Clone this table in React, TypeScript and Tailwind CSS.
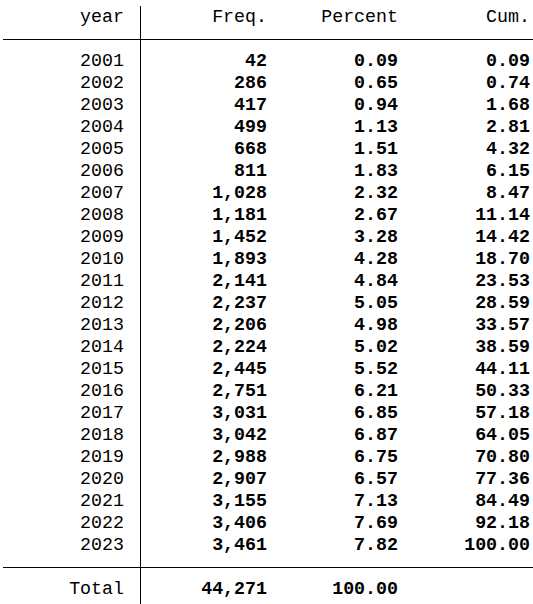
import React from 'react'

const rows: [string, string, string, string][] = [
  ['2001', '42', '0.09', '0.09'],
  ['2002', '286', '0.65', '0.74'],
  ['2003', '417', '0.94', '1.68'],
  ['2004', '499', '1.13', '2.81'],
  ['2005', '668', '1.51', '4.32'],
  ['2006', '811', '1.83', '6.15'],
  ['2007', '1,028', '2.32', '8.47'],
  ['2008', '1,181', '2.67', '11.14'],
  ['2009', '1,452', '3.28', '14.42'],
  ['2010', '1,893', '4.28', '18.70'],
  ['2011', '2,141', '4.84', '23.53'],
  ['2012', '2,237', '5.05', '28.59'],
  ['2013', '2,206', '4.98', '33.57'],
  ['2014', '2,224', '5.02', '38.59'],
  ['2015', '2,445', '5.52', '44.11'],
  ['2016', '2,751', '6.21', '50.33'],
  ['2017', '3,031', '6.85', '57.18'],
  ['2018', '3,042', '6.87', '64.05'],
  ['2019', '2,988', '6.75', '70.80'],
  ['2020', '2,907', '6.57', '77.36'],
  ['2021', '3,155', '7.13', '84.49'],
  ['2022', '3,406', '7.69', '92.18'],
  ['2023', '3,461', '7.82', '100.00'],
]

function Row({ label, cells, bold }: { label: string; cells: string[]; bold?: boolean }) {
  return (
    <div className="flex h-[22px] items-center">
      <div className="w-[140px] pr-[16px] text-right">{label}</div>
      <div className="flex h-full items-center border-l border-black">
        <div className={`w-[126px] text-right ${bold ? 'font-bold' : ''}`}>{cells[0]}</div>
        <div className={`w-[131px] text-right ${bold ? 'font-bold' : ''}`}>{cells[1]}</div>
        <div className={`w-[132px] text-right ${bold ? 'font-bold' : ''}`}>{cells[2]}</div>
      </div>
    </div>
  )
}

function Separator() {
  return (
    <div className="flex h-[22px]">
      <div className="flex w-[140px] items-center pl-[3px]">
        <div className="h-px w-full bg-black" />
      </div>
      <div className="flex flex-1 items-center border-l border-black">
        <div className="h-px w-full bg-black" />
      </div>
    </div>
  )
}

export default function App() {
  return (
    <div
      className="h-[604px] w-[533px] overflow-hidden bg-white pt-[6px] text-[18.3px] leading-[22px] text-black"
      style={{ fontFamily: '"Liberation Mono", "Courier New", monospace' }}
    >
      <Row label="year" cells={['Freq.', 'Percent', 'Cum.']} />
      <Separator />
      {rows.map((r) => (
        <Row key={r[0]} label={r[0]} cells={[r[1], r[2], r[3]]} bold />
      ))}
      <Separator />
      <Row label="Total" cells={['44,271', '100.00', '']} bold />
      <div className="ml-[140px] h-[30px] border-l border-black" />
    </div>
  )
}
